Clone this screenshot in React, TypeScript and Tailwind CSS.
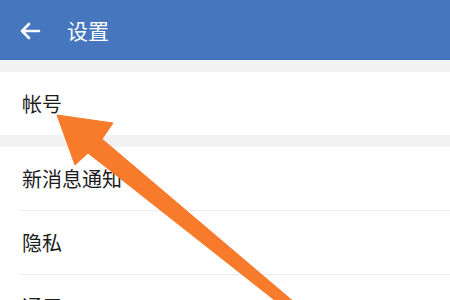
import React from "react";

const font = { fontFamily: '"Noto Sans CJK SC", "Noto Sans", sans-serif' };

function Row({ label, divider }: { label: string; divider?: boolean }) {
  return (
    <div className="relative h-[64px] flex items-center pl-[22px] bg-white">
      <span className="text-[20px] leading-none text-[#1c1c1c]">{label}</span>
      {divider && <div className="absolute left-[20px] right-0 bottom-0 h-px bg-[#ececec]" />}
    </div>
  );
}

export default function App() {
  return (
    <div className="relative w-[450px] h-[300px] overflow-hidden bg-white" style={font}>
      <div className="h-[60px] bg-[#4676be] border-b border-[#3f6cb0] flex items-center">
        <svg width="22" height="18" viewBox="0 0 22 18" className="ml-[19px] mt-[2px]">
          <path d="M20 9H3M10 2L3 9l7 7" fill="none" stroke="white" strokeWidth="2.6" strokeLinecap="round" strokeLinejoin="round" />
        </svg>
        <span className="ml-[26px] text-[21px] leading-none text-white mt-[1px]">设置</span>
      </div>
      <div className="h-[12px] bg-[#f2f2f2]" />
      <div className="h-[63px] flex items-center pl-[22px] bg-white">
        <span className="text-[20px] leading-none text-[#1c1c1c] mt-[1px]">帐号</span>
      </div>
      <div className="h-[12px] bg-[#f2f2f2]" />
      <div>
        <Row label="新消息通知" divider />
        <Row label="隐私" divider />
        <Row label="通用" />
      </div>
      <svg className="absolute inset-0" width="450" height="300" viewBox="0 0 450 300">
        <polygon
          points="57,115 113,123 102,139 294,302 277,302 88,153 75,165"
          fill="#f87a2b"
          stroke="#f87a2b"
          strokeWidth="1"
          strokeLinejoin="round"
        />
      </svg>
    </div>
  );
}
